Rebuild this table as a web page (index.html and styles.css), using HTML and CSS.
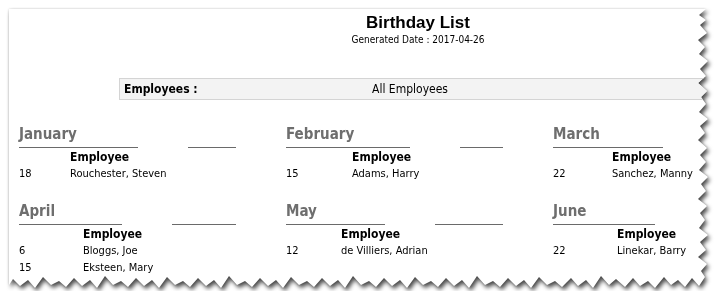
FILE: index.html
```html
<!DOCTYPE html>
<html lang="en">
<head>
<meta charset="utf-8">
<title>Birthday List</title>
<link rel="stylesheet" href="styles.css">
</head>
<body>
<div class="stage">
  <div class="sheet">
    <div class="paper">
      <header class="report-head">
        <h1 class="report-title">Birthday List</h1>
        <div class="report-date">Generated Date : 2017-04-26</div>
      </header>

      <div class="filter-bar">
        <div class="filter-label">Employees :</div>
        <div class="filter-value">All Employees</div>
      </div>

      <div class="months">
        <section class="month" style="--head-w:119px; --day-w:51px">
          <div class="month-head"><h2 class="month-name">January</h2><span class="month-rule"></span></div>
          <div class="entry entry-head"><span class="day"></span><span class="name">Employee</span></div>
          <div class="entry"><span class="day">18</span><span class="name">Rouchester, Steven</span></div>
        </section>
        <section class="month" style="--head-w:124px; --day-w:66px">
          <div class="month-head"><h2 class="month-name">February</h2><span class="month-rule"></span></div>
          <div class="entry entry-head"><span class="day"></span><span class="name">Employee</span></div>
          <div class="entry"><span class="day">15</span><span class="name">Adams, Harry</span></div>
        </section>
        <section class="month" style="--head-w:110px; --day-w:59px">
          <div class="month-head"><h2 class="month-name">March</h2><span class="month-rule"></span></div>
          <div class="entry entry-head"><span class="day"></span><span class="name">Employee</span></div>
          <div class="entry"><span class="day">22</span><span class="name">Sanchez, Manny</span></div>
        </section>
        <section class="month" style="--head-w:103px; --day-w:64px">
          <div class="month-head"><h2 class="month-name">April</h2><span class="month-rule"></span></div>
          <div class="entry entry-head"><span class="day"></span><span class="name">Employee</span></div>
          <div class="entry"><span class="day">6</span><span class="name">Bloggs, Joe</span></div>
          <div class="entry"><span class="day">15</span><span class="name">Eksteen, Mary</span></div>
        </section>
        <section class="month" style="--head-w:99px; --day-w:55px">
          <div class="month-head"><h2 class="month-name">May</h2><span class="month-rule"></span></div>
          <div class="entry entry-head"><span class="day"></span><span class="name">Employee</span></div>
          <div class="entry"><span class="day">12</span><span class="name">de Villiers, Adrian</span></div>
        </section>
        <section class="month" style="--head-w:102px; --day-w:64px">
          <div class="month-head"><h2 class="month-name">June</h2><span class="month-rule"></span></div>
          <div class="entry entry-head"><span class="day"></span><span class="name">Employee</span></div>
          <div class="entry"><span class="day">22</span><span class="name">Linekar, Barry</span></div>
        </section>
      </div>
    </div>
  </div>
</div>
</body>
</html>
```

FILE: styles.css
```css
html, body {
  margin: 0;
  background: #ffffff;
}

body {
  font-family: "DejaVu Sans Condensed", "Liberation Sans", sans-serif;
  color: #000;
  overflow: hidden;
}

.stage {
  padding: 9px 0 0 9px;
}

/* soft outline all round plus a heavier shadow on the torn edges */
.sheet {
  width: 700px;
  filter: drop-shadow(0 0 1px rgba(0, 0, 0, 0.18)) drop-shadow(2px 3px 2px rgba(0, 0, 0, 0.7));
}

/* page with a torn right and bottom edge */
.paper {
  width: 700px;
  height: 282px;
  padding-top: 4px;
  box-sizing: border-box;
  background: #fff;
  overflow: hidden;
  clip-path: polygon(
    0 0, 697px 0,
    690px 6px, 697px 11px, 691px 16px, 698px 24px, 689px 31px, 696px 38px, 690px 45px,
    699px 52px, 691px 60px, 697px 67px, 689px 74px, 698px 82px, 692px 88px, 697px 95px,
    690px 103px, 699px 110px, 691px 117px, 696px 124px, 689px 131px, 698px 139px, 691px 146px,
    697px 153px, 690px 161px, 699px 168px, 692px 175px, 697px 182px, 689px 190px, 698px 197px,
    691px 204px, 696px 211px, 690px 219px, 699px 226px, 691px 233px, 697px 241px, 689px 248px,
    698px 255px, 692px 262px, 696px 268px, 690px 277px,
    683px 269px, 676px 278px, 669px 271px, 662px 276px, 655px 268px, 646px 279px, 639px 272px,
    631px 277px, 624px 269px, 616px 278px, 607px 270px, 600px 276px, 592px 267px, 584px 279px,
    577px 271px, 569px 277px, 562px 269px, 553px 278px, 546px 272px, 538px 276px, 530px 268px,
    522px 279px, 515px 271px, 507px 277px, 499px 269px, 491px 278px, 484px 272px, 476px 276px,
    468px 267px, 460px 279px, 453px 271px, 445px 277px, 437px 269px, 429px 278px, 422px 272px,
    414px 276px, 406px 268px, 398px 279px, 391px 271px, 383px 277px, 375px 269px, 367px 278px,
    360px 272px, 352px 276px, 344px 267px, 336px 279px, 329px 271px, 321px 277px, 313px 269px,
    305px 278px, 298px 272px, 290px 276px, 282px 268px, 274px 279px, 267px 271px, 259px 277px,
    251px 269px, 243px 278px, 236px 272px, 228px 276px, 220px 267px, 212px 279px, 205px 271px,
    197px 277px, 189px 269px, 181px 278px, 174px 272px, 166px 276px, 158px 268px, 150px 279px,
    143px 271px, 135px 277px, 127px 269px, 119px 278px, 112px 272px, 104px 276px, 96px 267px,
    88px 279px, 81px 271px, 73px 277px, 65px 269px, 57px 278px, 50px 272px, 42px 276px,
    34px 268px, 26px 279px, 19px 271px, 11px 277px, 4px 270px, 0 276px
  );
}

/* report heading */
.report-head {
  width: 818px;
  text-align: center;
}

.report-title {
  margin: 0;
  font-family: "Liberation Sans", sans-serif;
  font-size: 17px;
  font-weight: bold;
  line-height: 20px;
}

.report-date {
  font-size: 10px;
  line-height: 13px;
}

/* selection criteria band */
.filter-bar {
  display: flex;
  width: 700px;
  height: 22px;
  box-sizing: border-box;
  margin: 32px 0 0 110px;
  background: #f3f3f3;
  border: 1px solid #d4d4d4;
  border-right: 0;
  font-size: 12px;
  line-height: 20px;
}

.filter-label {
  width: 181px;
  padding-left: 4px;
  box-sizing: border-box;
  font-weight: bold;
}

.filter-value {
  width: 218px;
  text-align: center;
}

/* month tables */
.months {
  display: grid;
  grid-template-columns: repeat(3, 217px);
  column-gap: 50px;
  row-gap: 20px;
  margin: 25px 0 0 10px;
}

.month-head {
  display: flex;
  gap: 50px;
}

.month-name {
  width: var(--head-w);
  margin: 0;
  padding-bottom: 4px;
  border-bottom: 1px solid #6a6a6a;
  font-size: 15px;
  line-height: 18px;
  color: #6e6e6e;
}

.month-rule {
  flex: 1;
  border-bottom: 1px solid #6a6a6a;
}

.entry {
  display: flex;
  font-size: 11px;
  line-height: 17px;
}

.entry-head {
  margin-top: 1px;
  font-size: 12px;
  line-height: 16px;
  font-weight: bold;
}

.day {
  width: var(--day-w);
  flex: none;
}

.name {
  white-space: nowrap;
}
```
